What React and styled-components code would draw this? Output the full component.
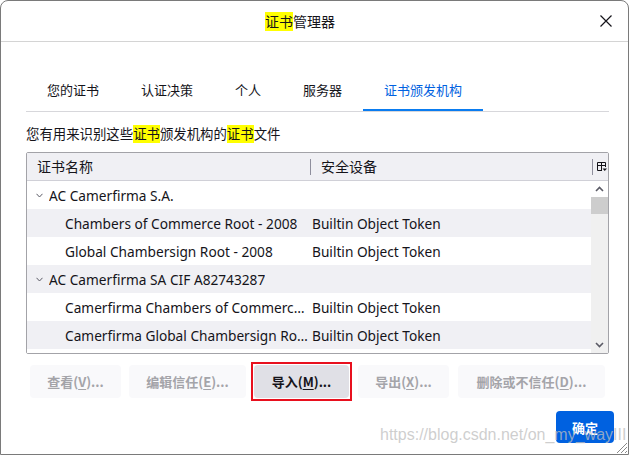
import React from 'react';
import styled, { createGlobalStyle } from 'styled-components';

const Global = createGlobalStyle`
    html, body {
        margin: 0;
        padding: 0;
        background: #fff;
    }
    body {
        font-family: 'Noto Sans', 'Noto Sans CJK SC', sans-serif;
        color: #15141a;
    }
`;

const Window = styled.div`
    position: relative;
    box-sizing: border-box;
    width: 629px;
    height: 455px;
    border: 1px solid #7a7a7a;
    border-radius: 8px 8px 0 0;
    background: #fff;
    overflow: hidden;
`;

const TitleBar = styled.div`
    display: flex;
    align-items: center;
    height: 40px;
    padding-left: 8px;
    padding-right: 7px;
    border-bottom: 1px solid #d4d4d4;
`;

const Title = styled.div`
    flex: 1;
    text-align: center;
    font-size: 14px;
    line-height: 17px;
`;

const Mark = styled.span`
    background: #ffff00;
`;

const CloseButton = styled.div`
    width: 30px;
    height: 30px;
    display: flex;
    align-items: center;
    justify-content: center;
`;

const Body = styled.div`
    padding: 0 19px 0 24px;
`;

const Tabs = styled.div`
    display: flex;
    margin-top: 28px;
    margin-left: 1px;
    border-bottom: 1px solid #d7d7db;
`;

const Tab = styled.div`
    height: 39px;
    padding: 0 21px;
    display: flex;
    align-items: center;
    font-size: 13px;
    color: ${({active}) => active ? '#0061e0' : '#15141a'};
    border-bottom: 2px solid ${({active}) => active ? '#0a7cf0' : 'transparent'};
`;

const Description = styled.div`
    margin-top: 13px;
    margin-left: 1px;
    font-size: 13.4px;
    line-height: 18px;
`;

const Tree = styled.div`
    margin-top: 9px;
    margin-left: 1px;
    border: 1px solid #a3a3a8;
    border-radius: 2px;
    font-size: 13.7px;
`;

const TreeHead = styled.div`
    display: flex;
    align-items: center;
    height: 27px;
    background: #f0f0f4;
    border-bottom: 1px solid #d0d0d7;
    font-size: 14px;
`;

const HeadCell = styled.div`
    box-sizing: border-box;
    width: ${({w}) => w ? `${w}px` : 'auto'};
    flex: ${({w}) => w ? 'none' : 1};
    padding-left: 10px;
    height: 16px;
    line-height: 16px;
    border-left: ${({divider}) => divider ? '1px solid #8f8f9d' : 'none'};
`;

const PickerCell = styled.div`
    width: 14px;
    height: 16px;
    border-left: 1px solid #8f8f9d;
    display: flex;
    align-items: center;
    justify-content: flex-end;
    padding-right: 1px;
`;

const TreeBody = styled.div`
    display: flex;
    height: 172px;
    overflow: hidden;
`;

const Rows = styled.div`
    flex: 1;
    min-width: 0;
`;

const Row = styled.div`
    display: flex;
    align-items: center;
    height: 28px;
    background: ${({odd}) => odd ? '#f0f0f4' : '#fff'};
`;

const NameCell = styled.div`
    box-sizing: border-box;
    width: 285px;
    flex: none;
    display: flex;
    align-items: center;
    padding-left: ${({child}) => child ? '38px' : '9px'};
    padding-right: 4px;
    white-space: nowrap;
    overflow: hidden;
`;

const NameText = styled.span`
    overflow: hidden;
    text-overflow: ellipsis;
`;

const Twisty = styled.svg`
    flex: none;
    margin-right: 6px;
`;

const DeviceCell = styled.div`
    flex: 1;
    white-space: nowrap;
`;

const Scrollbar = styled.div`
    width: 17px;
    flex: none;
    background: #f0f0f0;
    display: flex;
    flex-direction: column;
`;

const ScrollArrow = styled.div`
    height: 16px;
    display: flex;
    align-items: center;
    justify-content: center;
    background: ${({top}) => top ? '#fff' : '#f0f0f0'};
`;

const Thumb = styled.div`
    height: 17px;
    background: #cdcdcd;
`;

const Track = styled.div`
    flex: 1;
`;

const ButtonRow = styled.div`
    display: flex;
    margin-top: 7px;
    margin-left: 1px;
`;

const Button = styled.div`
    position: relative;
    box-sizing: border-box;
    height: 33px;
    width: ${({w}) => w}px;
    margin: 4px 4px 4px ${({ml}) => ml || 4}px;
    display: flex;
    align-items: center;
    justify-content: center;
    border-radius: 4px;
    font-family: 'Noto Sans CJK SC', 'Noto Sans', sans-serif;
    font-size: 13px;
    font-weight: 700;
    background: ${({disabled}) => disabled ? '#f9f9fb' : '#e0e0e6'};
    color: ${({disabled}) => disabled ? '#a4a4a9' : '#15141a'};

    u {
        text-underline-offset: 2px;
    }

    &::after {
        content: '';
        display: ${({marked}) => marked ? 'block' : 'none'};
        position: absolute;
        inset: -3px;
        border: 2px solid #e8101e;
    }
`;

const Footer = styled.div`
    display: flex;
    justify-content: flex-end;
    margin-top: 9px;
    padding-right: 14px;
`;

const PrimaryButton = styled.div`
    width: 58px;
    height: 32px;
    border-radius: 4px;
    background: #0061e0;
    color: #fff;
    font-family: 'Noto Sans CJK SC', sans-serif;
    font-size: 13px;
    font-weight: 700;
    display: flex;
    align-items: center;
    justify-content: center;
`;

const Watermark = styled.div`
    position: absolute;
    left: 379px;
    top: 424px;
    font-family: 'Liberation Sans', Arial, sans-serif;
    font-size: 16px;
    line-height: 20px;
    color: rgba(190, 190, 190, 0.75);
    white-space: nowrap;
    pointer-events: none;
`;

const Grip = styled.svg`
    position: absolute;
    right: 0;
    bottom: 0;
`;

const tabs = ['您的证书', '认证决策', '个人', '服务器', '证书颁发机构'];

const rows = [
    {name: 'AC Camerfirma S.A.', group: true},
    {name: 'Chambers of Commerce Root - 2008', device: 'Builtin Object Token'},
    {name: 'Global Chambersign Root - 2008', device: 'Builtin Object Token'},
    {name: 'AC Camerfirma SA CIF A82743287', group: true},
    {name: 'Camerfirma Chambers of Commerce Root', device: 'Builtin Object Token'},
    {name: 'Camerfirma Global Chambersign Root', device: 'Builtin Object Token'},
    {name: 'AC Camerfirma SA CIF A82743287', group: true},
];

const buttons = [
    {label: '查看', key: 'V', w: 91, disabled: true},
    {label: '编辑信任', key: 'E', w: 117, disabled: true},
    {label: '导入', key: 'M', w: 95, marked: true},
    {label: '导出', key: 'X', w: 91, disabled: true, ml: 5},
    {label: '删除或不信任', key: 'D', w: 147, disabled: true, ml: 5},
];

const Chevron = ({up}) => (
    <svg width="9" height="6" viewBox="0 0 9 6">
        <path d={up ? 'M1 5 L4.5 1.5 L8 5' : 'M1 1 L4.5 4.5 L8 1'} fill="none" stroke="#5b5b66" strokeWidth="1.6"/>
    </svg>
);

export default function App() {
    return (
        <>
            <Global/>
            <Window>
                <TitleBar>
                    <Title><Mark>证书</Mark>管理器</Title>
                    <CloseButton>
                        <svg width="12" height="12" viewBox="0 0 12 12">
                            <path d="M0.5 0.5 L11.5 11.5 M11.5 0.5 L0.5 11.5" stroke="#15141a" strokeWidth="1.2"/>
                        </svg>
                    </CloseButton>
                </TitleBar>
                <Body>
                    <Tabs>
                        {tabs.map((t, i) => (
                            <Tab key={t} active={i === tabs.length - 1}>{t}</Tab>
                        ))}
                    </Tabs>
                    <Description>
                        您有用来识别这些<Mark>证书</Mark>颁发机构的<Mark>证书</Mark>文件
                    </Description>
                    <Tree>
                        <TreeHead>
                            <HeadCell w={283}>证书名称</HeadCell>
                            <HeadCell divider>安全设备</HeadCell>
                            <PickerCell>
                                <svg width="10" height="11" viewBox="0 0 10 11">
                                    <path d="M0.5 1.5 H8.5 V6 M0.5 1.5 V9.5 H5 M0.5 4.5 H8.5 M4.5 1.5 V9.5" fill="none" stroke="#15141a" strokeWidth="1"/>
                                    <path d="M5.5 7.5 H10 L7.75 10 Z" fill="#15141a"/>
                                </svg>
                            </PickerCell>
                        </TreeHead>
                        <TreeBody>
                            <Rows>
                                {rows.map((r, i) => (
                                    <Row key={i} odd={i % 2 === 1}>
                                        <NameCell child={!r.group}>
                                            {r.group && (
                                                <Twisty width="7" height="5" viewBox="0 0 7 5">
                                                    <path d="M0.5 0.8 L3.5 4 L6.5 0.8" fill="none" stroke="#5b5b66" strokeWidth="1"/>
                                                </Twisty>
                                            )}
                                            <NameText>{r.name}</NameText>
                                        </NameCell>
                                        <DeviceCell>{r.device}</DeviceCell>
                                    </Row>
                                ))}
                            </Rows>
                            <Scrollbar>
                                <ScrollArrow top><Chevron up/></ScrollArrow>
                                <Thumb/>
                                <Track/>
                                <ScrollArrow><Chevron/></ScrollArrow>
                            </Scrollbar>
                        </TreeBody>
                    </Tree>
                    <ButtonRow>
                        {buttons.map(b => (
                            <Button key={b.key} w={b.w} ml={b.ml} disabled={b.disabled} marked={b.marked}>
                                {b.label}(<u>{b.key}</u>)...
                            </Button>
                        ))}
                    </ButtonRow>
                </Body>
                <Footer>
                    <PrimaryButton>确定</PrimaryButton>
                </Footer>
                <Watermark>https://blog.csdn.net/on_my_wayIII</Watermark>
                <Grip width="14" height="14" viewBox="0 0 14 14">
                    <path d="M13 3 L3 13 M13 7 L7 13 M13 11 L11 13" stroke="#8a8a8a" strokeWidth="1"/>
                </Grip>
            </Window>
        </>
    );
}
